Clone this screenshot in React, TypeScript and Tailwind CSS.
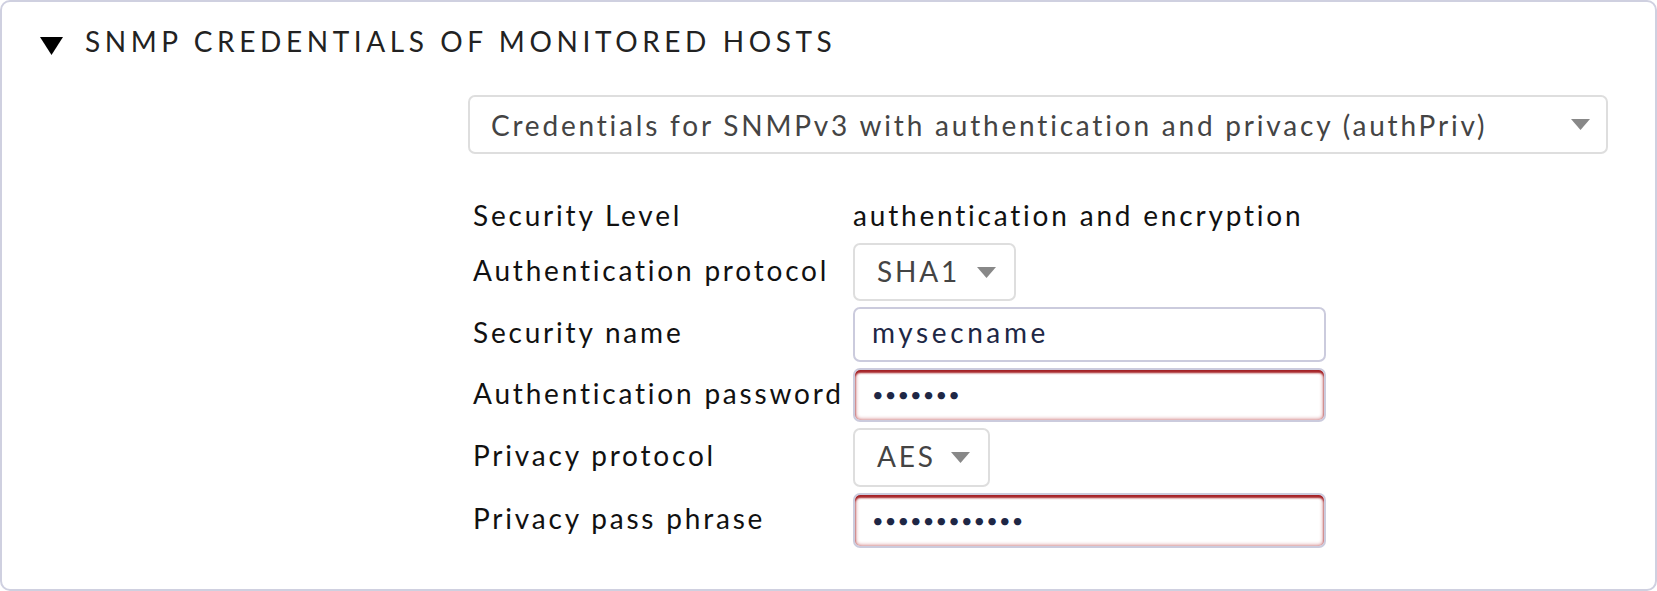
import React from "react"

function Caret({ className = "" }: { className?: string }) {
  return (
    <svg className={className} width="19" height="11" viewBox="0 0 19 11">
      <path d="M0 0h19L9.5 11z" fill="#888888" />
    </svg>
  )
}

function Select({ value, width }: { value: string; width: string }) {
  return (
    <div
      className={`${width} h-full flex items-center justify-between pl-[22px] pr-[18px] rounded-[7px] border-2 border-[#dedede] bg-white text-[#444444]`}
    >
      <span className="pb-[3px]">{value}</span>
      <Caret />
    </div>
  )
}

function TextInput({ value, secret }: { value: string; secret?: boolean }) {
  return (
    <div
      className={`w-[473px] h-full flex items-center pl-[17px] rounded-[7px] border-2 border-[#cbcbdd] bg-white text-[#1e2745] ${
        secret
          ? "text-[20px] tracking-[1.1px] pb-[2px] shadow-[inset_0_3px_2px_rgba(160,25,30,0.95),inset_0_0_4px_rgba(175,35,40,0.8)]"
          : "tracking-[3.6px] pb-[5px]"
      }`}
    >
      {value}
    </div>
  )
}

export default function App() {
  const rows = [
    { label: "Security Level", h: "h-[40px]", el: <span className="pb-[5px] text-[#111111]">authentication and encryption</span> },
    { label: "Authentication protocol", h: "h-[58px]", el: <Select value="SHA1" width="w-[163px]" /> },
    { label: "Security name", h: "h-[55px]", el: <TextInput value="mysecname" /> },
    { label: "Authentication password", h: "h-[54px]", el: <TextInput value="•••••••" secret /> },
    { label: "Privacy protocol", h: "h-[59px]", el: <Select value="AES" width="w-[137px]" /> },
    { label: "Privacy pass phrase", h: "h-[55px]", el: <TextInput value="••••••••••••" secret /> },
  ]

  return (
    <div className="w-[1657px] h-[591px] bg-white font-['Lato','Noto_Sans',sans-serif]">
      <div className="w-full h-full border-2 border-[#cfd0e0] rounded-[10px] flex flex-col">
        <div className="flex items-center h-[76px] pl-[38px] pt-[2px]">
          <svg width="23" height="18" viewBox="0 0 23 18" className="mt-[10px]">
            <path d="M0 0h23L11.5 18z" fill="#000000" />
          </svg>
          <h3 className="ml-[22px] text-[28px] tracking-[4.6px] text-[#222222] uppercase">
            SNMP Credentials of monitored hosts
          </h3>
        </div>

        <div className="pl-[466px] pr-[47px] mt-[17px]">
          <div className="h-[59px] flex items-center justify-between pl-[21px] pr-[16px] rounded-[7px] border-2 border-[#dedede] text-[28px] tracking-[2.8px] text-[#444444]">
            <span>Credentials for SNMPv3 with authentication and privacy (authPriv)</span>
            <Caret />
          </div>
        </div>

        <div className="pl-[471px] mt-[43px] flex flex-col gap-[6px] text-[28px] tracking-[2.8px] text-[#111111]">
          {rows.map((r) => (
            <div key={r.label} className={`flex items-center ${r.h}`}>
              <div className="w-[380px] shrink-0 whitespace-nowrap pb-[5px]">{r.label}</div>
              {r.el}
            </div>
          ))}
        </div>
      </div>
    </div>
  )
}
